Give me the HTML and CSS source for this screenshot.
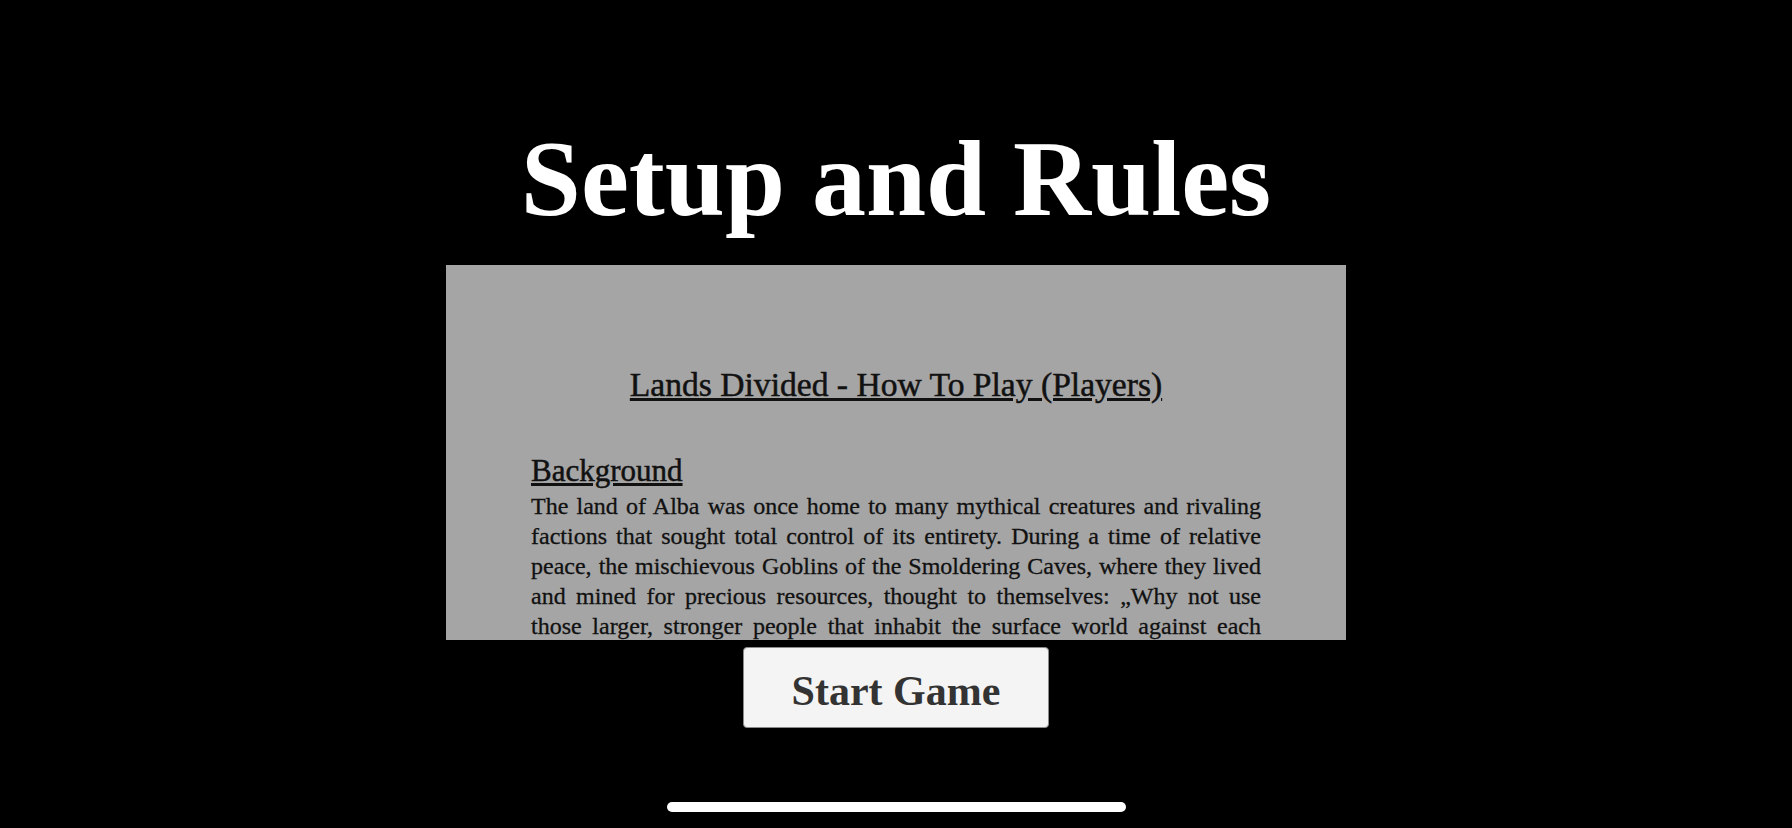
FILE: index.html
```html
<!DOCTYPE html>
<html lang="en">
<head>
    <meta charset="UTF-8">
    <meta name="viewport" content="width=device-width, initial-scale=1.0">
    <title>Setup and Rules</title>
    <link rel="stylesheet" href="styles.css">
</head>
<body>
    <main class="setup">
        <h1 class="setup-title">Setup and Rules</h1>

        <section class="rules">
            <div class="rules-content">
                <h2 class="rules-heading">Lands Divided - How To Play (Players)</h2>

                <h3 class="rules-subheading">Background</h3>
                <p>The land of Alba was once home to many mythical creatures and rivaling factions that sought total control of its entirety. During a time of relative peace, the mischievous Goblins of the Smoldering Caves, where they lived and mined for precious resources, thought to themselves: „Why not use those larger, stronger people that inhabit the surface world against each other, so that we may rule over the land of Alba?"</p>
            </div>
        </section>

        <button class="start-button" type="button">Start Game</button>
    </main>

    <div class="home-indicator"></div>
</body>
</html>
```

FILE: styles.css
```css
:root {
    --bg: #000;
    --panel: #a5a5a5;
    --text-dark: #111;
    --button-bg: #f4f4f4;
}

* {
    margin: 0;
    padding: 0;
    box-sizing: border-box;
}

body {
    background: var(--bg);
    font-family: 'Liberation Serif', 'DejaVu Serif', serif;
    height: 100vh;
    overflow: hidden;
}

.setup {
    display: flex;
    flex-direction: column;
    align-items: center;
    padding-top: 116px;
}

.setup-title {
    color: #fff;
    font-size: 108px;
    font-weight: 700;
    line-height: 126px;
    margin-bottom: 23px;
}

.rules {
    width: 900px;
    height: 375px;
    background: var(--panel);
    overflow: hidden;
}

.rules-content {
    padding: 100px 85px 0;
    color: var(--text-dark);
}

.rules-heading {
    font-size: 33.6px;
    font-weight: 400;
    text-align: center;
    text-decoration: underline;
    line-height: 40px;
    margin-bottom: 48px;
    -webkit-text-stroke: 0.5px var(--text-dark);
}

.rules-subheading {
    font-size: 31px;
    font-weight: 400;
    text-decoration: underline;
    line-height: 36px;
    margin-bottom: 2px;
    -webkit-text-stroke: 0.5px var(--text-dark);
}

.rules-content p {
    font-size: 24px;
    line-height: 30px;
    text-align: justify;
    -webkit-text-stroke: 0.3px var(--text-dark);
}

.start-button {
    margin-top: 7px;
    width: 306px;
    height: 81px;
    padding-top: 6px;
    background: var(--button-bg);
    border: 1px solid #8a8a8a;
    border-radius: 4px;
    color: #333;
    font-family: inherit;
    font-size: 42px;
    font-weight: 700;
}

.home-indicator {
    position: fixed;
    left: 667px;
    bottom: 16px;
    width: 459px;
    height: 10px;
    border-radius: 5px;
    background: #fff;
}
```
